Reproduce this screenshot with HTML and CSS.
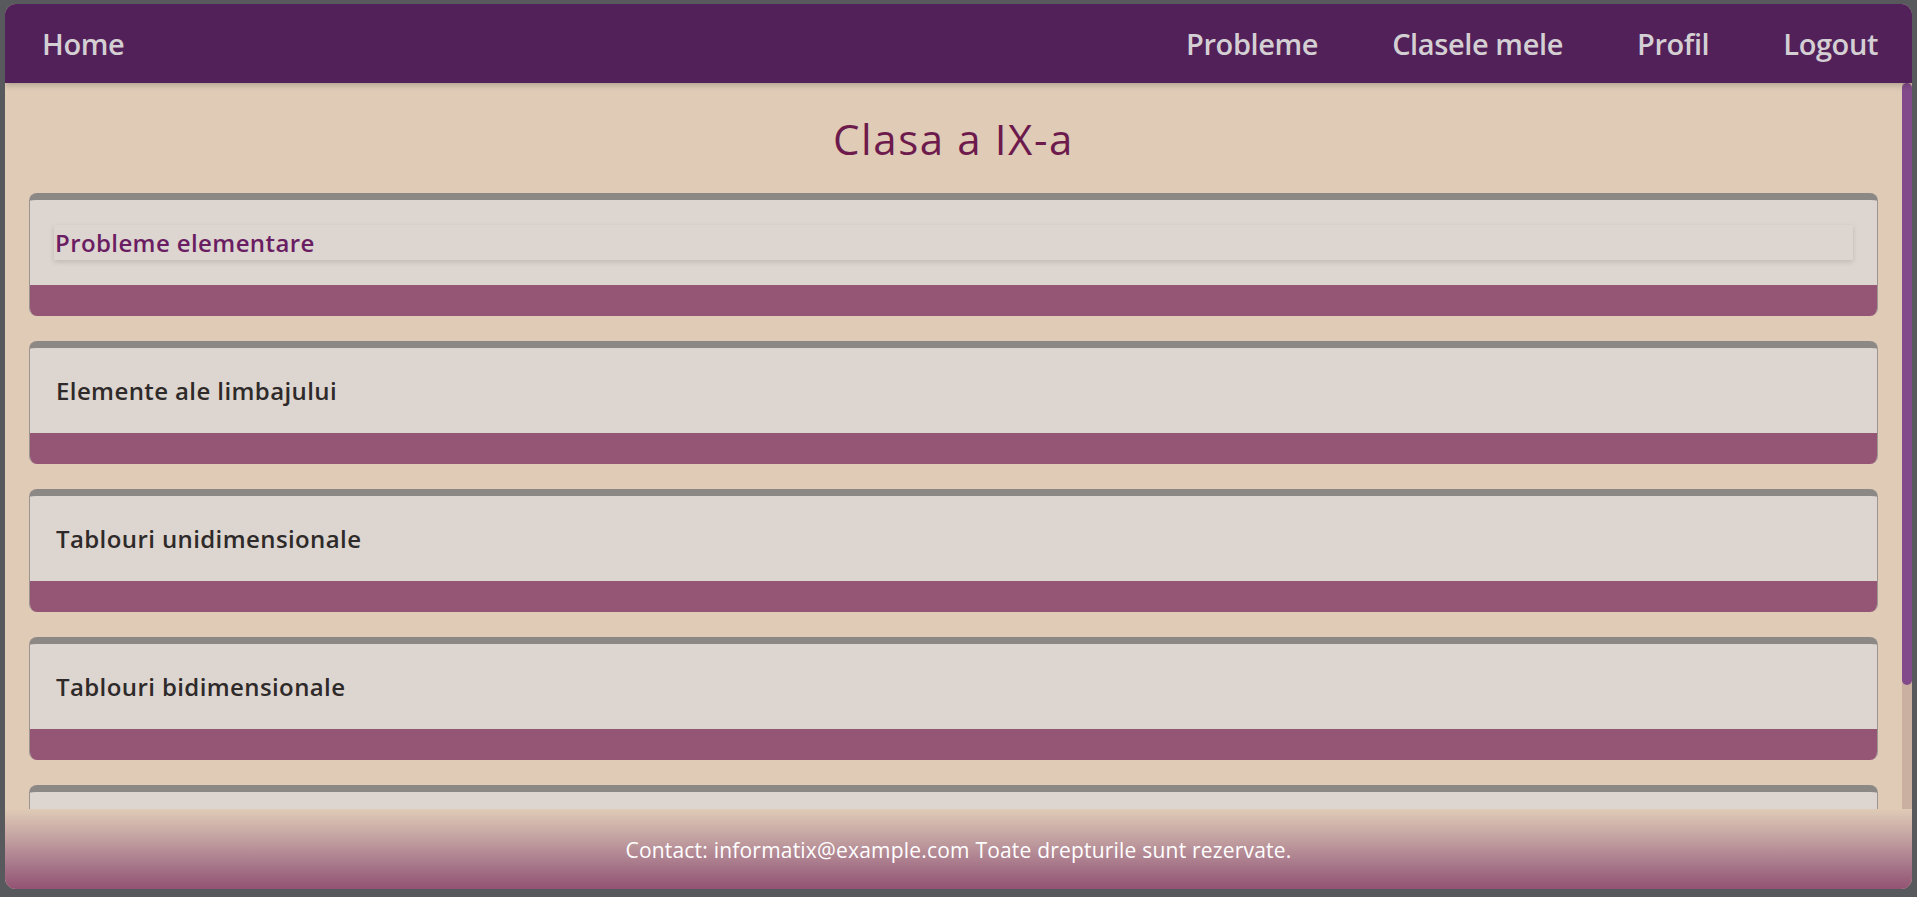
FILE: index.html
```html
<!DOCTYPE html>
<html lang="ro">
<head>
<meta charset="utf-8">
<title>Clasa a IX-a</title>
<link rel="stylesheet" href="styles.css">
</head>
<body>
<div class="app">
  <header class="topbar">
    <a class="nav-link" href="#">Home</a>
    <nav class="nav-right">
      <a class="nav-link" href="#">Probleme</a>
      <a class="nav-link" href="#">Clasele mele</a>
      <a class="nav-link" href="#">Profil</a>
      <a class="nav-link" href="#">Logout</a>
    </nav>
  </header>
  <div class="viewport">
    <main class="content">
      <h1 class="page-title">Clasa a IX-a</h1>
      <section class="chapters">
        <div class="chapter">
          <div class="chapter-body">
            <div class="chapter-name active">Probleme elementare</div>
          </div>
          <div class="chapter-band"></div>
        </div>
        <div class="chapter">
          <div class="chapter-body">
            <div class="chapter-name">Elemente ale limbajului</div>
          </div>
          <div class="chapter-band"></div>
        </div>
        <div class="chapter">
          <div class="chapter-body">
            <div class="chapter-name">Tablouri unidimensionale</div>
          </div>
          <div class="chapter-band"></div>
        </div>
        <div class="chapter">
          <div class="chapter-body">
            <div class="chapter-name">Tablouri bidimensionale</div>
          </div>
          <div class="chapter-band"></div>
        </div>
        <div class="chapter">
          <div class="chapter-body"></div>
          <div class="chapter-band"></div>
        </div>
      </section>
    </main>
    <div class="scroll-track" aria-hidden="true">
      <div class="scroll-thumb"></div>
    </div>
  </div>
  <footer class="footer">
    <p>Contact: informatix@example.com Toate drepturile sunt rezervate.</p>
  </footer>
</div>
</body>
</html>
```

FILE: styles.css
```css
* { box-sizing: border-box; }

html, body {
  margin: 0;
  height: 100%;
}

body {
  background: #58595d;
  padding: 4px 5px 8px 5px;
  font-family: "Open Sans", "Noto Sans", sans-serif;
  overflow: hidden;
}

.app {
  height: 885px;
  display: flex;
  flex-direction: column;
  border-radius: 11px;
  overflow: hidden;
  background: #dfcbb6;
}

.topbar {
  height: 79px;
  flex: none;
  background: #52215a;
  display: flex;
  align-items: center;
  justify-content: space-between;
  box-shadow: 0 2px 6px rgba(0, 0, 0, 0.22);
  position: relative;
  z-index: 2;
}

.nav-right {
  display: flex;
  align-items: center;
}

.nav-link {
  color: #d4cfd3;
  text-decoration: none;
  font-size: 29px;
  font-weight: 600;
  letter-spacing: -0.4px;
  padding: 0 37px;
}

.topbar > .nav-link {
  padding-left: 37px;
}

.nav-right .nav-link:last-child {
  padding-right: 34px;
}

.viewport {
  flex: 1;
  min-height: 0;
  display: flex;
}

.content {
  flex: 1;
  min-width: 0;
  overflow: hidden;
  padding: 0 24px 50px 24px;
}

.scroll-track {
  width: 10px;
  flex: none;
  background: #c9b0a0;
}

.scroll-thumb {
  height: 602px;
  background: #824a8a;
  border-radius: 5px;
}

.page-title {
  margin: 0;
  height: 110px;
  display: flex;
  align-items: center;
  justify-content: center;
  color: #6d1a4c;
  font-size: 42px;
  font-weight: 500;
  letter-spacing: 1.6px;
}

.chapters {
  display: flex;
  flex-direction: column;
  gap: 25px;
}

.chapter {
  border-radius: 8px;
  overflow: hidden;
  border-top: 7px solid #8c8886;
  border-left: 1px solid #9b9490;
  border-right: 1px solid #9b9490;
  background: #ddd5cf;
}

.chapter-body {
  height: 85px;
  padding: 25px 24px;
  display: flex;
  align-items: center;
}

.chapter-name {
  flex: 1;
  padding-left: 2px;
  color: #2e2a2a;
  font-size: 24px;
  font-weight: 600;
  letter-spacing: 0.4px;
}

.chapter-name.active {
  height: 35px;
  display: flex;
  align-items: center;
  padding-left: 1px;
  color: #6a1d62;
  box-shadow: 0 2px 5px rgba(0, 0, 0, 0.13);
}

.chapter-band {
  height: 31px;
  background: #955574;
}

.footer {
  height: 80px;
  flex: none;
  display: flex;
  align-items: center;
  justify-content: center;
  background: linear-gradient(to bottom, #dfcbb6 0%, #c4a3a2 35%, #a7778a 70%, #935373 100%);
}

.footer p {
  margin: 0;
  padding-top: 2px;
  color: #ffffff;
  font-size: 21px;
  font-weight: 400;
  letter-spacing: 0.2px;
}
```
